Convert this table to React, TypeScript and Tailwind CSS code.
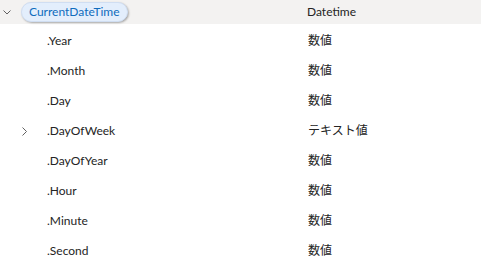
const rows = [
  { name: '.Year', type: '数値' },
  { name: '.Month', type: '数値' },
  { name: '.Day', type: '数値' },
  { name: '.DayOfWeek', type: 'テキスト値', expandable: true },
  { name: '.DayOfYear', type: '数値' },
  { name: '.Hour', type: '数値' },
  { name: '.Minute', type: '数値' },
  { name: '.Second', type: '数値' },
];

export default function App() {
  return (
    <div
      className="w-[481px] h-[263px] bg-white text-[12px] text-[#242424] overflow-hidden"
      style={{ fontFamily: 'Lato, "Noto Sans CJK JP", sans-serif' }}
    >
      {/* Header */}
      <div className="h-[24px] bg-[#f3f2f1] flex items-center">
        <div className="w-[21px] flex pl-[3px]">
          <svg width="8" height="5" viewBox="0 0 8 5" className="text-[#616161]">
            <polyline points="0.5,0.5 4,4 7.5,0.5" fill="none" stroke="currentColor" strokeWidth="1" />
          </svg>
        </div>
        <div className="w-[286px]">
          <span className="inline-flex items-center h-[20px] px-[7px] rounded-full bg-[#e3eefc] border border-[#d0def2] shadow-[1px_1px_2px_rgba(0,0,0,0.3)] text-[#0f6cbd] leading-none">
            CurrentDateTime
          </span>
        </div>
        <span className="leading-none">Datetime</span>
      </div>

      {/* Rows */}
      <div className="mt-[2px] flex flex-col">
        {rows.map((row) => (
          <div key={row.name} className="h-[30px] flex items-center">
            <div className="w-[47px] flex pl-[22px]">
              {row.expandable && (
                <svg width="5" height="9" viewBox="0 0 5 9" className="text-[#616161]">
                  <polyline points="0.5,0.5 4.5,4.5 0.5,8.5" fill="none" stroke="currentColor" strokeWidth="1" />
                </svg>
              )}
            </div>
            <div className="w-[261px]">{row.name}</div>
            <div>{row.type}</div>
          </div>
        ))}
      </div>
    </div>
  );
}
